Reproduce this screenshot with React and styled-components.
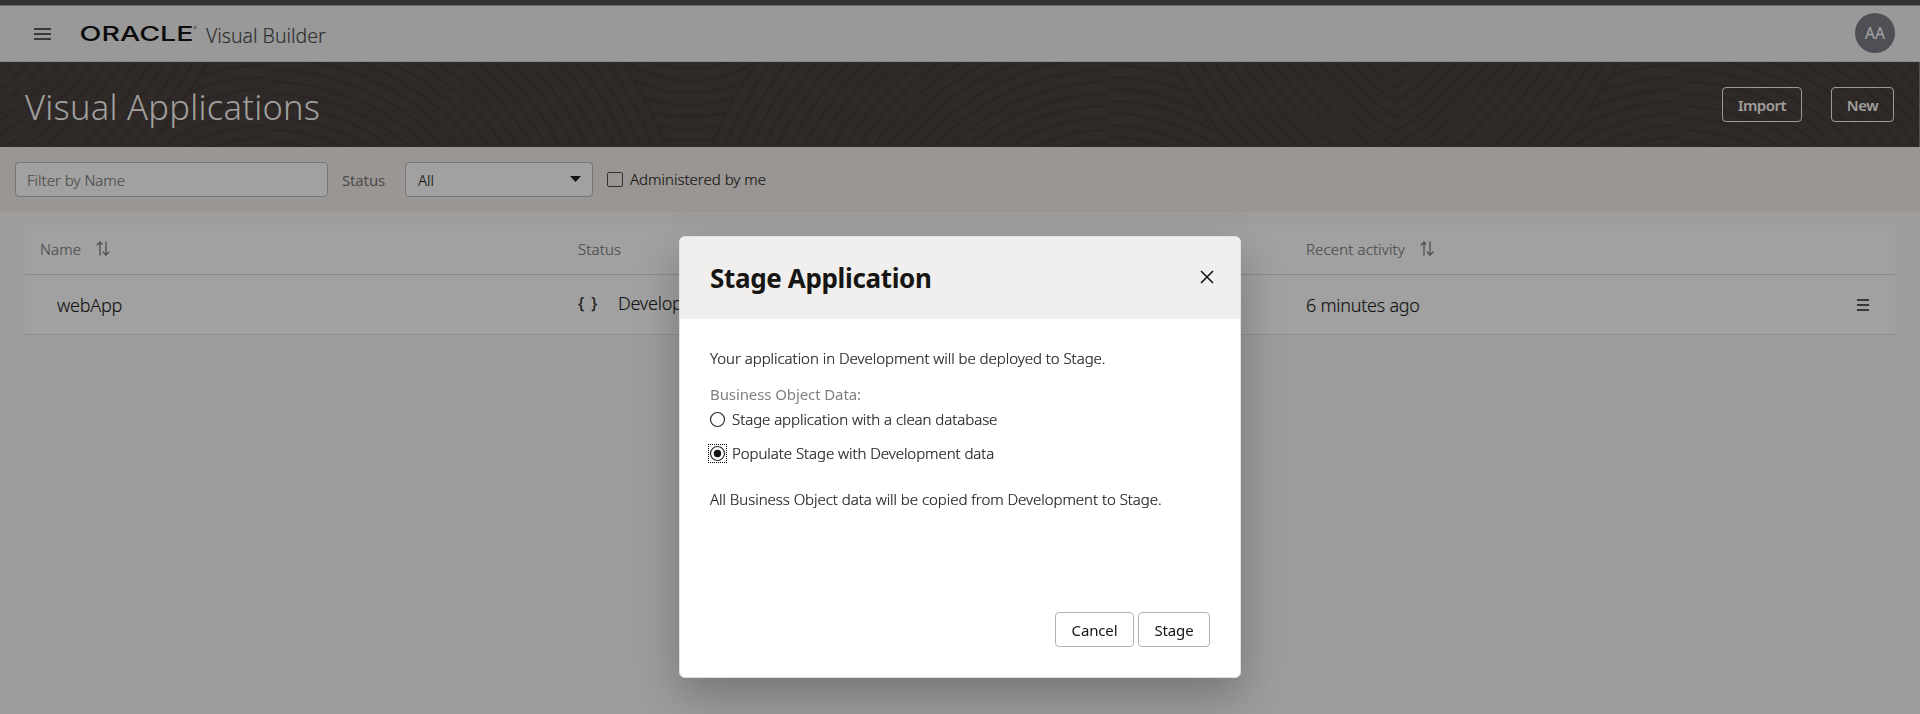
import React from 'react';
import styled, { createGlobalStyle } from 'styled-components';

const GlobalStyle = createGlobalStyle`
  *, *::before, *::after { box-sizing: border-box; }
  html, body { margin: 0; height: 100%; overflow: hidden; }
  body {
    background: #9e9d9b;
    font-family: "Noto Sans", "Open Sans", sans-serif;
    font-size: 15px;
    font-weight: 300;
    color: #161513;
  }
  button, input { font: inherit; color: inherit; }
`;

const Page = styled.div`
  display: flex;
  flex-direction: column;
  height: 714px;
  overflow: hidden;
  -webkit-text-stroke: 0.15px currentColor;
`;

const Header = styled.header`
  display: flex;
  align-items: center;
  height: 62px;
  padding: 0 25px 0 34px;
  background: #999;
  border-top: 5px solid #333;
  border-bottom: 1px solid #8b8b8a;
  box-shadow: inset 0 1px 0 #6b6b6b;
`;

const Bars = styled.span`
  display: flex;
  flex-direction: column;
  justify-content: space-between;
  width: ${(p) => p.$width}px;
  height: ${(p) => p.$height}px;
  margin-top: ${(p) => p.$top || 0}px;
  &::before, &::after, i { content: ''; display: block; height: 2px; background: #383a36; }
`;

const Logo = styled.svg`
  width: 118px;
  height: 20px;
  margin: 2px 0 0 29px;
  overflow: visible;
  -webkit-text-stroke: 0;
`;

const Product = styled.span`
  flex: 1;
  margin: 4px 0 0 8px;
  font-size: 19.5px;
  letter-spacing: -0.02px;
  color: #303030;
`;

const Avatar = styled.span`
  display: grid;
  place-items: center;
  width: 40px;
  height: 40px;
  border-radius: 50%;
  background: #4f4f56;
  color: #a3a3a3;
  font-size: 15.5px;
  font-weight: 400;
`;

const Banner = styled.section`
  position: relative;
  display: flex;
  align-items: center;
  gap: 29px;
  height: 85px;
  padding: 0 25px;
  background: #2f2a28;
  border-right: 1px solid #55514e;
  -webkit-text-stroke: 0;
`;

const Pattern = styled.svg`
  position: absolute;
  inset: 0;
  width: 100%;
  height: 100%;
`;

const Title = styled.h1`
  position: relative;
  flex: 1;
  margin: 5px 0 0;
  font-size: 34.5px;
  font-weight: 300;
  letter-spacing: 0.25px;
  line-height: 40px;
  color: #a0a09f;
`;

const BannerButton = styled.button`
  position: relative;
  width: ${(p) => p.$width}px;
  height: 35px;
  padding: 1px 0 0;
  background: transparent;
  border: 1px solid #9c9a98;
  border-radius: 4px;
  color: #a09f9d;
  font-size: 15px;
  font-weight: 600;
  letter-spacing: -0.5px;
`;

const Filters = styled.section`
  display: flex;
  align-items: center;
  height: 65px;
  padding: 0 15px;
  background: #9a9694;
`;

const NameFilter = styled.input`
  width: 313px;
  height: 35px;
  padding: 1px 11px 0;
  background: #a1a1a1;
  border: 1px solid #77767a;
  border-radius: 4px;
  &::placeholder { color: #4c4b49; opacity: 1; }
`;

const FilterLabel = styled.span`
  width: 77px;
  padding: 0 0 0 14px;
  font-weight: 400;
  letter-spacing: -0.15px;
  color: #4d4a48;
  -webkit-text-stroke: 0;
`;

const SelectBox = styled.div`
  display: flex;
  align-items: center;
  justify-content: space-between;
  width: 188px;
  height: 35px;
  padding: 1px 11px 0 12px;
  background: #a1a1a1;
  border: 1px solid #77767a;
  border-radius: 4px;
  svg { width: 11px; height: 6px; margin-bottom: 2px; }
`;

const CheckLabel = styled.label`
  display: flex;
  align-items: center;
  gap: 7px;
  margin: 0 0 1px 14px;
  &::before {
    content: '';
    width: 16px;
    height: 15px;
    border: 1.5px solid #33312f;
    border-radius: 2px;
  }
`;

const Table = styled.section`
  margin: 13px 25px 0;
  background: #a1a1a1;
`;

const Row = styled.div`
  display: grid;
  grid-template-columns: 538px 728px 1fr;
  align-items: center;
  height: ${(p) => (p.$head ? 50 : 60)}px;
  padding: ${(p) => (p.$head ? '0 26px 2px 15px' : '0 26px 0 15px')};
  border-bottom: 1px solid ${(p) => (p.$head ? '#8b8b8b' : '#929190')};
  color: ${(p) => (p.$head ? '#4c4b49' : '#161513')};
  font-size: ${(p) => (p.$head ? 15 : 18)}px;
  letter-spacing: ${(p) => (p.$head ? 0.12 : -0.25)}px;
`;

const Cell = styled.div`
  display: flex;
  align-items: center;
  gap: ${(p) => p.$gap || 0}px;
  padding: ${(p) => p.$pad || '0'};
  justify-content: ${(p) => (p.$spread ? 'space-between' : 'flex-start')};
`;

const Braces = styled.span`
  width: 20px;
  font-size: 16px;
  font-weight: 400;
  letter-spacing: 0;
  word-spacing: 3px;
  white-space: nowrap;
`;

const SortSvg = styled.svg`
  width: 14px;
  height: 15px;
  fill: none;
  stroke: #4f4e4c;
  stroke-width: 1.3;
`;

const Overlay = styled.div`
  position: fixed;
  inset: 0;
  display: flex;
  align-items: flex-start;
  justify-content: center;
  padding-top: 236px;
  -webkit-text-stroke: 0.2px currentColor;
`;

const Dialog = styled.div`
  display: flex;
  flex-direction: column;
  width: 562px;
  height: 442px;
  background: #fff;
  border: 1px solid #e2e1df;
  border-radius: 6px;
  overflow: hidden;
  box-shadow: 0 18px 44px 0 rgba(0, 0, 0, 0.25);
`;

const DialogHeader = styled.div`
  display: flex;
  align-items: center;
  justify-content: space-between;
  height: 82px;
  padding: 0 26px 0 30px;
  background: #f0efed;
  svg { width: 14px; height: 14px; margin-bottom: 3px; }
`;

const DialogTitle = styled.h2`
  margin: 0;
  font-size: 26px;
  font-weight: 700;
  letter-spacing: -0.35px;
  -webkit-text-stroke: 0;
`;

const DialogBody = styled.div`
  display: flex;
  flex-direction: column;
  flex: 1;
  padding: 29px 30px 0;
`;

const Line = styled.p`
  height: 20px;
  margin: ${(p) => p.$top || 0}px 0 0;
  line-height: 20px;
  white-space: nowrap;
  font-weight: ${(p) => (p.$muted ? 400 : 300)};
  letter-spacing: ${(p) => (p.$muted ? -0.1 : -0.04)}px;
  color: ${(p) => (p.$muted ? '#82807d' : '#1f1e1c')};
  -webkit-text-stroke-width: ${(p) => (p.$muted ? 0 : 0.2)}px;
`;

const RadioRow = styled.label`
  display: flex;
  align-items: center;
  height: 20px;
  margin-top: ${(p) => p.$top}px;
  letter-spacing: -0.06px;
  color: #1f1e1c;
`;

const RadioMark = styled.span`
  display: grid;
  place-items: center;
  width: 19px;
  height: 19px;
  margin: 1px 5px 0 -2px;
  border: 1px ${(p) => (p.$focused ? 'dotted #000' : 'solid transparent')};
  svg { display: block; width: 17px; height: 17px; }
`;

const DialogFooter = styled.div`
  display: flex;
  justify-content: flex-end;
  gap: 4px;
  padding: 0 30px 30px;
`;

const DialogButton = styled.button`
  width: ${(p) => p.$width}px;
  height: 35px;
  padding: 1px 0 0;
  background: #fff;
  border: 1px solid #b3b2b1;
  border-radius: 4px;
  font-weight: 400;
  letter-spacing: -0.15px;
  -webkit-text-stroke: 0;
`;

const BASE = '#2f2a28';
const LINE = '#2b2624';

function Rings({ cx, cy, r, clip, step = 12 }) {
  const radii = [];
  for (let k = r; k > 0; k -= step) radii.push(k);
  return (
    <g clipPath={clip && `url(#${clip})`}>
      <circle cx={cx} cy={cy} r={r} fill={BASE} />
      {radii.map((k) => (
        <circle key={k} cx={cx} cy={cy} r={k} fill="none" stroke={LINE} strokeWidth="2.4" />
      ))}
    </g>
  );
}

function BannerPattern() {
  return (
    <Pattern viewBox="0 62 1919 85" preserveAspectRatio="none" aria-hidden="true">
      <defs>
        <clipPath id="c0"><rect x="0" y="62" width="268" height="85" /></clipPath>
        <clipPath id="c1"><rect x="272" y="62" width="420" height="85" /></clipPath>
        <clipPath id="c2"><rect x="688" y="62" width="418" height="85" /></clipPath>
        <clipPath id="c3"><rect x="1110" y="62" width="200" height="85" /></clipPath>
        <clipPath id="c4"><rect x="1110" y="62" width="286" height="85" /></clipPath>
        <clipPath id="c5"><rect x="1396" y="62" width="283" height="85" /></clipPath>
        <clipPath id="c6"><rect x="1683" y="62" width="237" height="85" /></clipPath>
        <clipPath id="c7"><rect x="1500" y="62" width="179" height="85" /></clipPath>
      </defs>
      <Rings cx={270} cy={305} r={300} clip="c0" />
      <Rings cx={-232} cy={-185} r={504} clip="c0" />
      <Rings cx={690} cy={-35} r={260} />
      <Rings cx={270} cy={305} r={427} clip="c1" />
      <Rings cx={1108} cy={305} r={427} clip="c2" />
      <Rings cx={1108} cy={305} r={300} clip="c3" />
      <Rings cx={1612} cy={-185} r={504} clip="c4" />
      <Rings cx={1681} cy={305} r={300} clip="c7" />
      <Rings cx={1179} cy={-185} r={504} clip="c5" />
      <Rings cx={1681} cy={305} r={427} clip="c6" />
    </Pattern>
  );
}

function SortIcon() {
  return (
    <SortSvg viewBox="0 0 14 15">
      <path d="M4 14.5V1M.8 4.4 4 1l2.4 2.6M10 .5V14M6.8 10.8 10 14l3.4-3.4" />
    </SortSvg>
  );
}

function MenuIcon({ width, height, top }) {
  return <Bars $width={width} $height={height} $top={top}><i /></Bars>;
}

function RadioOption({ checked, top, children }) {
  return (
    <RadioRow $top={top}>
      <RadioMark $focused={checked}>
        <svg viewBox="0 0 17 17">
          <circle cx="8.5" cy="8.5" r="7" fill="none" stroke="#2b2a28" strokeWidth="1.2" />
          {checked && <circle cx="8.5" cy="8.5" r="3.7" fill="#161513" />}
        </svg>
      </RadioMark>
      {children}
    </RadioRow>
  );
}

export default function App() {
  return (
    <>
      <GlobalStyle />
      <Page>
        <Header>
          <MenuIcon width={17} height={12} top={2} />
          <Logo viewBox="0 0 118 20">
            <text x="-0.5" y="16.5" fontFamily="Inter, sans-serif" fontSize="20.5" fontWeight="500" fill="#0c0c0c" textLength="114" lengthAdjust="spacingAndGlyphs">ORACLE</text>
            <text x="113.5" y="5.5" fontFamily="Inter, sans-serif" fontSize="4.5" fill="#0c0c0c">®</text>
          </Logo>
          <Product>Visual Builder</Product>
          <Avatar>AA</Avatar>
        </Header>
        <Banner>
          <BannerPattern />
          <Title>Visual Applications</Title>
          <BannerButton $width={80}>Import</BannerButton>
          <BannerButton $width={63}>New</BannerButton>
        </Banner>
        <Filters>
          <NameFilter placeholder="Filter by Name" />
          <FilterLabel>Status</FilterLabel>
          <SelectBox>
            All
            <svg viewBox="0 0 11 6"><path d="M0 0h11L5.5 6z" fill="#161513" /></svg>
          </SelectBox>
          <CheckLabel>Administered by me</CheckLabel>
        </Filters>
        <Table>
          <Row $head>
            <Cell $gap={15}>Name <SortIcon /></Cell>
            <Cell>Status</Cell>
            <Cell $gap={15}>Recent activity <SortIcon /></Cell>
          </Row>
          <Row>
            <Cell $pad="1px 0 0 17px">webApp</Cell>
            <Cell $gap={20} $pad="0 0 3px 0"><Braces>{'{ }'}</Braces>Development</Cell>
            <Cell $spread $pad="1px 0 0">6 minutes ago <MenuIcon width={12} height={12} /></Cell>
          </Row>
        </Table>
      </Page>
      <Overlay>
        <Dialog role="dialog">
          <DialogHeader>
            <DialogTitle>Stage Application</DialogTitle>
            <svg viewBox="0 0 14 14"><path d="M1 1l12 12M13 1 1 13" stroke="#161513" strokeWidth="1.6" fill="none" /></svg>
          </DialogHeader>
          <DialogBody>
            <Line>Your application in Development will be deployed to Stage.</Line>
            <Line $muted $top={16}>Business Object Data:</Line>
            <RadioOption top={5}>Stage application with a clean database</RadioOption>
            <RadioOption top={14} checked>Populate Stage with Development data</RadioOption>
            <Line $top={26}>All Business Object data will be copied from Development to Stage.</Line>
          </DialogBody>
          <DialogFooter>
            <DialogButton $width={79}>Cancel</DialogButton>
            <DialogButton $width={72}>Stage</DialogButton>
          </DialogFooter>
        </Dialog>
      </Overlay>
    </>
  );
}
